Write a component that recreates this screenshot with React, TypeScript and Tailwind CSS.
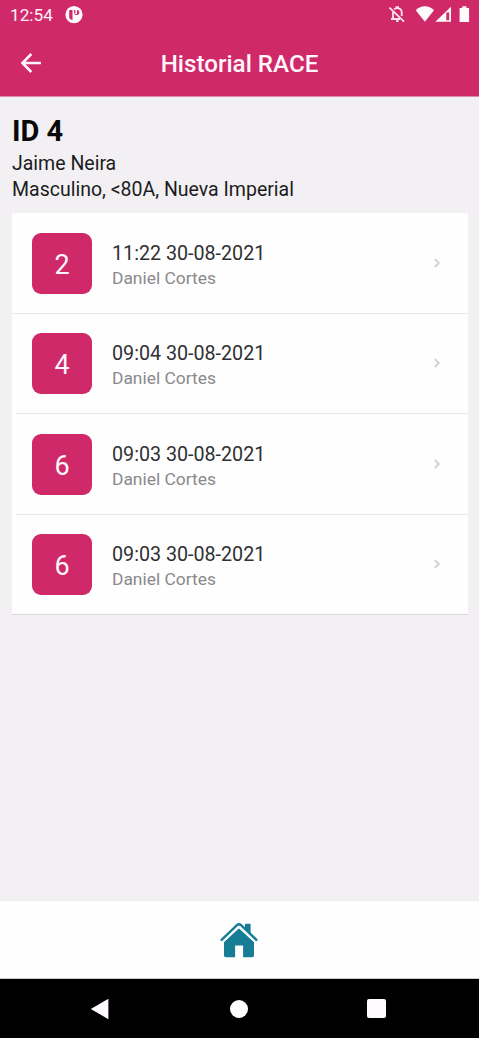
const records = [
  { id: 1, score: 2, date: '11:22 30-08-2021', author: 'Daniel Cortes' },
  { id: 2, score: 4, date: '09:04 30-08-2021', author: 'Daniel Cortes' },
  { id: 3, score: 6, date: '09:03 30-08-2021', author: 'Daniel Cortes' },
  { id: 4, score: 6, date: '09:03 30-08-2021', author: 'Daniel Cortes' },
];

function StatusBar() {
  return (
    <div className="flex h-[30px] items-center pl-[10px] text-[#fff3f8]">
      <span className="w-[55px] text-[17.2px] leading-[30px] whitespace-nowrap">12:54</span>
      <svg className="h-[18px] w-[18px]" viewBox="0 0 18 18">
        <circle cx="9" cy="8.7" r="8.6" fill="#fffafc" />
        <path d="M4.2 4.6q0-.6.6-.6h2.7v10.2q-2.4-.5-3.3-2.4ZM9.1 4h1.3v3.6H9.1ZM12 4.1q2.4.2 2.4 2.4T12 9.1H9.8V7.9H12Z" fill="#cf2969" />
      </svg>
      <svg className="ml-auto h-[30px] w-[94px]" viewBox="0 0 94 30" fill="#fffafa">
        <path d="M4.5 7.7 19 21.7" stroke="#fbe3eb" strokeWidth="1.8" fill="none" />
        <path d="M9.2 9.3c.7-.7 1.5-1.1 2.2-1.2V7.2h1.7v.9c2.3.5 3.6 2 3.6 4.2v3.6M8 12v6.5M6 19h9M11.2 21h2.3" stroke="#fbe3eb" strokeWidth="1.8" fill="none" />
        <path d="M30.7 10.2C35.8 5 44 5 49 10.2L39.9 21.8Z" />
        <path d="M50.3 21.8 66 6.7v15.1Z" />
        <path d="M61.3 12.4h2.9v7.9h-2.9Z" fill="#cf2969" />
        <path d="M74.6 8h2.6V6.2h4.2V8h2.7v14h-9.5Z" />
      </svg>
    </div>
  );
}

function Header() {
  return (
    <header className="h-[97px] shrink-0 border-b border-[#dc8caf] bg-[#cf2969]">
      <StatusBar />
      <div className="grid h-[66px] grid-cols-[60px_1fr_60px] items-center">
        <button aria-label="Volver" className="flex pl-[20px]">
          <svg className="h-[22px] w-[22px]" viewBox="0 0 22 22" fill="none" stroke="#fff6fa" strokeWidth="2.5">
            <path d="M11.3 2 2.4 11l8.9 9M2.5 11h18.4" />
          </svg>
        </button>
        <h1 className="pt-[3px] text-center text-[24.2px] font-medium whitespace-nowrap text-[#fff6fa]">Historial RACE</h1>
      </div>
    </header>
  );
}

function RecordRow({ score, date, author }: { score: number; date: string; author: string }) {
  return (
    <li className="group h-[100.5px]">
      <div className="flex h-[99.5px] items-center pl-[20px]">
        <div className="mt-px flex h-[61px] w-[60px] items-center justify-center rounded-[9px] bg-[#cf2969] pt-[3px] text-[27px] text-[#fff6fa]">
          {score}
        </div>
        <div className="ml-[20px] flex flex-col pt-[5px]">
          <span className="text-[19.7px] leading-[25px] text-[#303032]">{date}</span>
          <span className="text-[17.4px] leading-[24px] text-[#8a898c]">{author}</span>
        </div>
        <svg className="mr-[27px] ml-auto h-[10px] w-[8px]" viewBox="0 0 8 10" fill="none" stroke="#d5d2d8" strokeWidth="2">
          <path d="m1.8 1 4 4-4 4" />
        </svg>
      </div>
      <div className="h-px bg-[#e9e8ea] group-[:nth-child(2)]:ml-[4px] group-[:nth-child(3)]:ml-[4px] group-last:bg-[#d9d7db]" />
    </li>
  );
}

function HomeIcon() {
  return (
    <svg className="mr-[2px] h-[36px] w-[38px]" viewBox="0 0 38 36" fill="#167d95">
      <path d="M25 2.6q0-.8.8-.8h4q.8 0 .8.8v9.5l-5.6-5Z" />
      <path d="M4 20 19 6l15 14V33.4q0 1.8-1.8 1.8h-9.1V23.4h-8v11.8H5.8Q4 35.2 4 33.4Z" />
      <path d="M3 20 18 6q1-.9 2 0l15 14" fill="none" stroke="#f5fdfe" strokeWidth="1.7" />
      <path d="M1.6 17.8 17.2 3q1.8-1.6 3.6 0l15.6 14.8" fill="none" stroke="#167d95" strokeWidth="2.4" strokeLinecap="round" />
    </svg>
  );
}

function SystemNavigation() {
  return (
    <nav className="flex h-[59px] shrink-0 items-center justify-between bg-black pr-[93px] pl-[90px]">
      <svg className="h-[22px] w-[20px]" viewBox="0 0 20 22" fill="#fffaff">
        <path d="M.8 11 18.4.8v20.4Z" />
      </svg>
      <span className="h-[18px] w-[18px] rounded-full bg-white" />
      <span className="h-[19px] w-[19px] rounded-[2px] bg-[#fffcff]" />
    </nav>
  );
}

export default function App() {
  return (
    <div className="flex h-[1038px] w-[479px] flex-col overflow-hidden bg-[#f2f0f3] font-['Roboto',sans-serif]">
      <Header />
      <main className="flex-1 px-[12px] pt-[16px]">
        <h2 className="text-[29px] leading-[36px] font-bold text-[#09090a]">ID 4</h2>
        <div className="pt-[2px] text-[19.5px] leading-[26px] text-[#1c1c1d]">
          <p>Jaime Neira</p>
          <p className="whitespace-nowrap">Masculino, &lt;80A, Nueva Imperial</p>
        </div>
        <ul className="mt-[10px] w-[456px] bg-[#fefefe]">
          {records.map(({ id, ...record }) => (
            <RecordRow key={id} {...record} />
          ))}
        </ul>
      </main>
      <footer className="flex h-[79px] shrink-0 items-center justify-center border-t border-b border-t-[#eeecef] border-b-[#c9cac8] bg-[#fefefe]">
        <HomeIcon />
      </footer>
      <SystemNavigation />
    </div>
  );
}
